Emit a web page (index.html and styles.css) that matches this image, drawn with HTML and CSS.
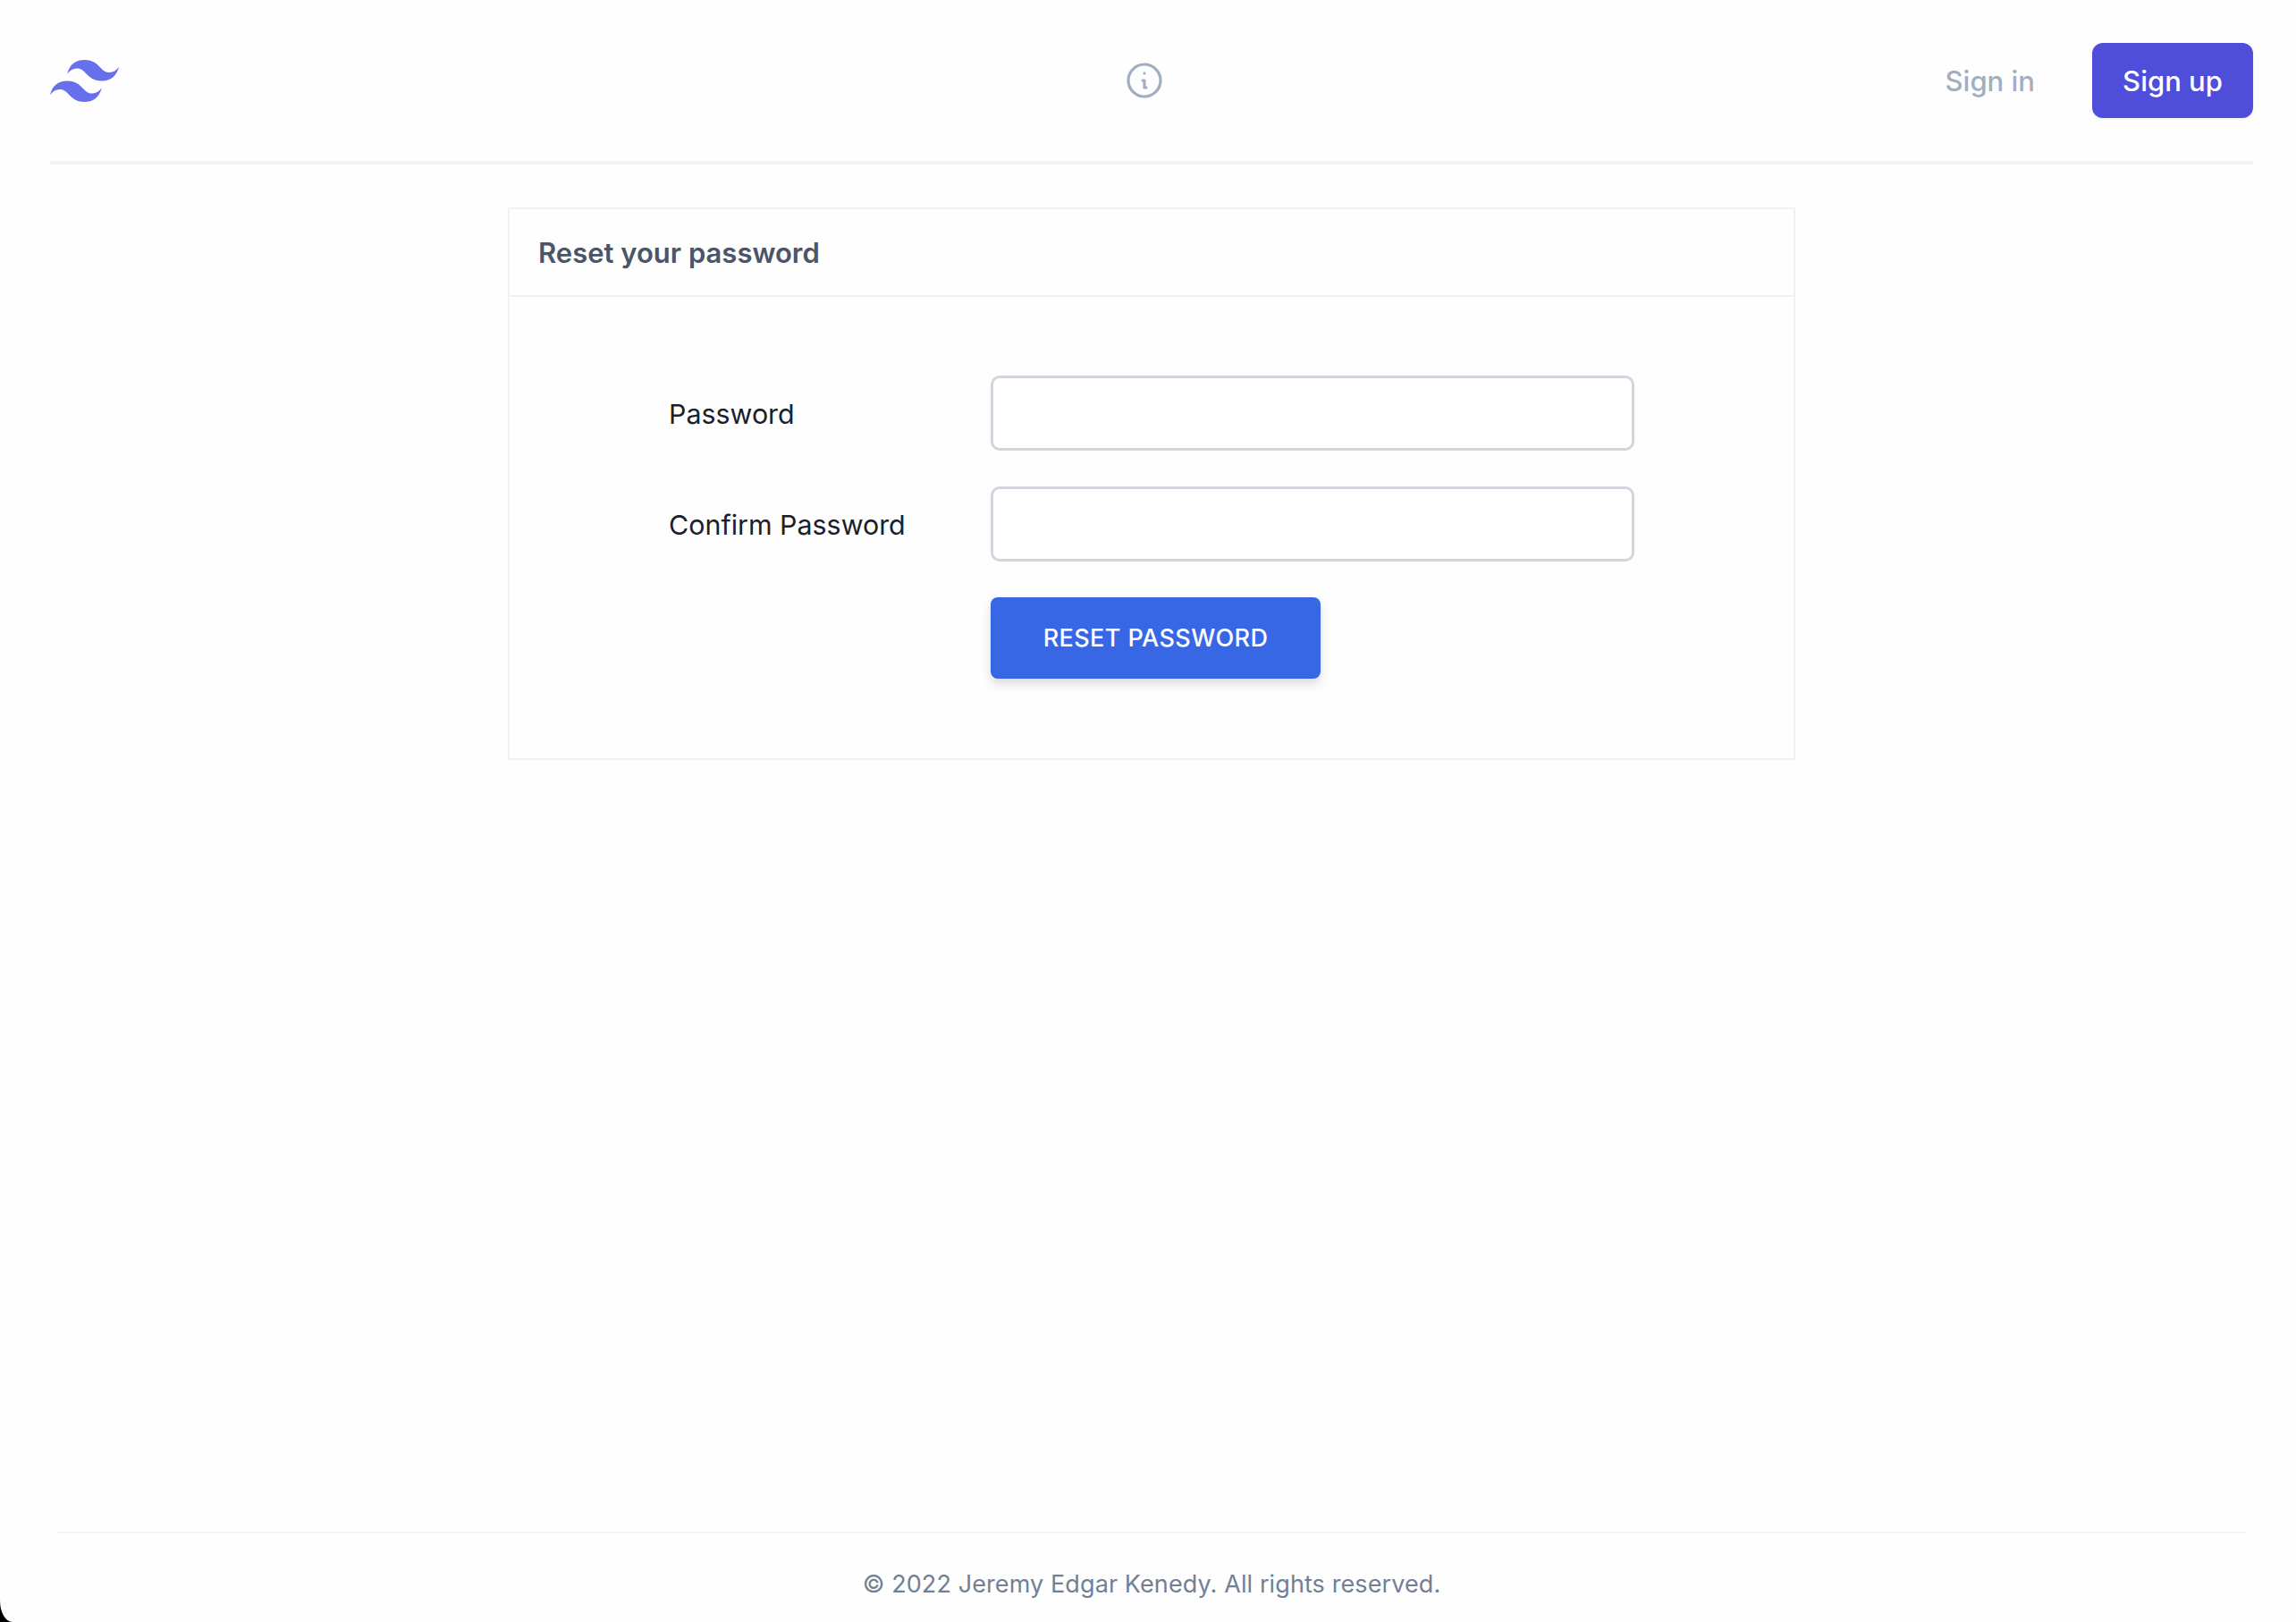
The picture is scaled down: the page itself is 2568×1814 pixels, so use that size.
FILE: index.html
```html
<!DOCTYPE html>
<html lang="en">
<head>
  <meta charset="UTF-8" />
  <meta name="viewport" content="width=device-width, initial-scale=1.0"/>
  <title>Reset your password</title>
  <link rel="stylesheet" href="styles.css">
</head>
<body>

  <div class="page">
    <header class="topbar">
      <a class="logo" href="#">
        <svg viewBox="0 0 54 32.4" width="77" height="47" preserveAspectRatio="none">
          <path d="M27 0c-7.2 0-11.7 3.6-13.5 10.8 2.7-3.6 5.85-4.95 9.45-4.05 2.054.513 3.522 2.004 5.147 3.653C30.744 13.09 33.808 16.2 40.5 16.2c7.2 0 11.7-3.6 13.5-10.8-2.7 3.6-5.85 4.95-9.45 4.05-2.054-.513-3.522-2.004-5.147-3.653C36.756 3.11 33.692 0 27 0zM13.5 16.2C6.3 16.2 1.8 19.8 0 27c2.7-3.6 5.85-4.95 9.45-4.05 2.054.514 3.522 2.004 5.147 3.653C17.244 29.29 20.308 32.4 27 32.4c7.2 0 11.7-3.6 13.5-10.8-2.7 3.6-5.85 4.95-9.45 4.05-2.054-.513-3.522-2.004-5.147-3.653C23.256 19.31 20.192 16.2 13.5 16.2z"/>
        </svg>
      </a>
      <a class="info" href="#">
        <svg viewBox="0 0 24 24" width="48" height="48" fill="none" stroke="currentColor" stroke-width="1.6" stroke-linecap="round" stroke-linejoin="round">
          <path d="M13 16h-1v-4h-1m1-4h.01M21 12a9 9 0 11-18 0 9 9 0 0118 0z"/>
        </svg>
      </a>
      <nav class="auth">
        <a class="signin" href="#">Sign in</a>
        <a class="signup" href="#">Sign up</a>
      </nav>
    </header>

    <main class="main">
      <section class="card">
        <div class="card-header">Reset your password</div>
        <form class="card-body">
          <div class="form-row">
            <label for="password">Password</label>
            <input type="password" id="password" />
          </div>
          <div class="form-row">
            <label for="confirm">Confirm Password</label>
            <input type="password" id="confirm" />
          </div>
          <div class="form-row">
            <span></span>
            <div><button type="submit">RESET PASSWORD</button></div>
          </div>
        </form>
      </section>
    </main>

    <footer class="footer">© 2022 Jeremy Edgar Kenedy. All rights reserved.</footer>
  </div>

</body>
</html>
```

FILE: styles.css
```css
* {
  box-sizing: border-box;
}
html, body {
  height: 100%;
}
body {
  font-family: Inter, 'Noto Sans', sans-serif;
  background-color: #000;
  margin: 0;
}
a {
  text-decoration: none;
}
.page {
  min-height: 100vh;
  display: flex;
  flex-direction: column;
  background-color: #fefefe;
  border-bottom-left-radius: 14px 24px;
}
.topbar {
  display: grid;
  grid-template-columns: 1fr 48px 1fr;
  align-items: center;
  margin: 0 48px 0 56px;
  padding: 48px 0;
  border-bottom: 4px solid #f3f3f4;
}
.logo {
  display: flex;
}
.logo svg {
  fill: #6670ec;
}
.info {
  display: flex;
  color: #a0aec0;
  margin-left: -8px;
}
.auth {
  display: flex;
  align-items: center;
  justify-content: flex-end;
  gap: 64px;
  font-size: 31px;
  font-weight: 500;
}
.signin {
  color: #a0aec0;
}
.signup {
  color: white;
  background-color: #4f4edb;
  width: 180px;
  height: 84px;
  line-height: 86px;
  text-align: center;
  border-radius: 12px;
  box-shadow: 0 1px 3px rgba(0, 0, 0, 0.08);
}
.main {
  flex: 1;
  padding: 48px 0 0 8px;
}
.card {
  width: 1440px;
  margin: auto;
  border: 2px solid #edf2f7;
}
.card-header {
  padding: 0 32px;
  height: 98px;
  line-height: 98px;
  font-size: 31px;
  font-weight: 600;
  color: #4a5568;
  border-bottom: 2px solid #edf2f7;
}
.card-body {
  width: 1080px;
  margin: auto;
  padding: 88px 0 89px;
  display: flex;
  flex-direction: column;
  gap: 40px;
}
.form-row {
  display: grid;
  grid-template-columns: 360px 720px;
  align-items: center;
}
.form-row label {
  font-size: 30.4px;
  padding-top: 2px;
  color: #1a202c;
}
.form-row input {
  width: 100%;
  height: 84px;
  padding: 0 24px;
  font-size: 32px;
  background-color: white;
  border: 3px solid #d2d6dc;
  border-radius: 10px;
}
button {
  display: block;
  width: 369px;
  height: 91px;
  font-family: inherit;
  font-size: 27px;
  font-weight: 500;
  letter-spacing: 0.4px;
  color: white;
  background-color: #3767e4;
  border: none;
  border-radius: 8px;
  box-shadow: 0 6px 12px rgba(0, 0, 0, 0.14);
}
.footer {
  margin: 0 56px 0 64px;
  padding: 37px 0 22px;
  border-top: 2px solid #f3f3f4;
  text-align: center;
  font-size: 27px;
  line-height: 40px;
  letter-spacing: 0.1px;
  color: #718096;
}
```
